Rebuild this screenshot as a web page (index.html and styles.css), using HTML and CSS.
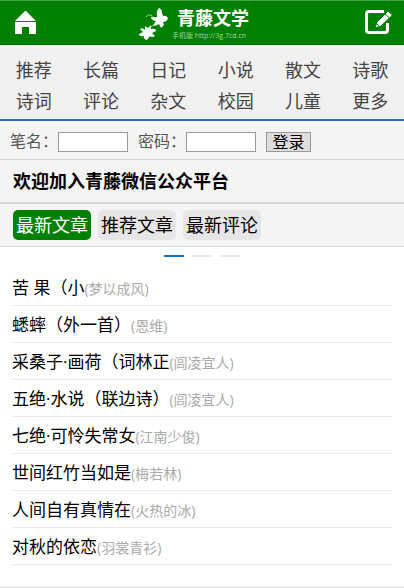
FILE: index.html
```html
<!DOCTYPE html>
<html lang="zh-CN">
<head>
    <meta charset="UTF-8">
    <meta name="viewport" content="width=device-width, initial-scale=1">
    <title>青藤文学</title>
    <link rel="stylesheet" href="styles.css">
</head>
<body>
<header class="header">
    <a class="icon-link" href="#" aria-label="首页">
        <svg class="icon-home" viewBox="0 0 22 24" width="22" height="24" fill="#fff">
            <path d="M10 0L0 10H21L11 0Z"/>
            <path d="M0 11H21V23H14V16H7V23H0Z"/>
        </svg>
    </a>
    <a class="logo" href="#">
        <svg viewBox="0 0 30 34" width="30" height="34" fill="#fff">
            <path d="M20 1Q23 2 23 6L24 9Q27 8 29 11Q28 15 24 15L25 18L22 21L20 17Q16 20 14 18L17 14Q12 13 12 10L18 10Q17 4 20 1Z"/>
            <path d="M6 19L9 21L12 18L12 22Q17 21 17 24L13 26L16 29Q13 31 11 29L8 33Q4 32 5 29Q0 30 0 27L4 25L1 22Q4 20 6 23Z"/>
            <path d="M7 10Q8 7 12 8Q14 9 13 11M11 20Q14 20 16 16" fill="none" stroke="#8fc98f" stroke-width="1"/>
        </svg>
        <span class="logo-text">
            <strong class="logo-name">青藤文学</strong>
            <small class="logo-url">手机版 http://3g.7cd.cn</small>
        </span>
    </a>
    <a class="icon-link icon-right" href="#" aria-label="投稿">
        <svg viewBox="0 0 28 25" width="28" height="25">
            <path d="M19 1.500H4Q1.500 1.500 1.500 4V20Q1.500 22.500 4 22.500H20Q22.500 22.500 22.500 20V13" fill="none" stroke="#fff" stroke-width="3"/>
            <path d="M23 1L27.500 5L16 16L10 18L12 12Z" fill="#fff" stroke="#008000" stroke-width="1"/>
            <path d="M20 4L24.500 8M12 14L14 16" fill="none" stroke="#008000" stroke-width="1"/>
        </svg>
    </a>
</header>

<nav class="nav">
    <a href="#">推荐</a>
    <a href="#">长篇</a>
    <a href="#">日记</a>
    <a href="#">小说</a>
    <a href="#">散文</a>
    <a href="#">诗歌</a>
    <a href="#">诗词</a>
    <a href="#">评论</a>
    <a href="#">杂文</a>
    <a href="#">校园</a>
    <a href="#">儿童</a>
    <a href="#">更多</a>
</nav>

<form class="login">
    <label for="username">笔名：</label>
    <input type="text" id="username" name="username">
    <label for="password">密码：</label>
    <input type="password" id="password" name="password">
    <button type="submit">登录</button>
</form>

<h1 class="notice">欢迎加入青藤微信公众平台</h1>

<div class="tabs">
    <button type="button" class="tab active">最新文章</button>
    <button type="button" class="tab">推荐文章</button>
    <button type="button" class="tab">最新评论</button>
</div>

<main class="content">
    <div class="dots">
        <span class="dot current"></span>
        <span class="dot"></span>
        <span class="dot"></span>
    </div>
    <ul class="list">
        <li><a href="#">苦 果（小</a><span class="author">(梦以成风)</span></li>
        <li><a href="#">蟋蟀（外一首）</a><span class="author">(恩维)</span></li>
        <li><a href="#">采桑子·画荷（词林正</a><span class="author">(闾凌宜人)</span></li>
        <li><a href="#">五绝·水说（联边诗）</a><span class="author">(闾凌宜人)</span></li>
        <li><a href="#">七绝·可怜失常女</a><span class="author">(江南少俊)</span></li>
        <li><a href="#">世间红竹当如是</a><span class="author">(梅若林)</span></li>
        <li><a href="#">人间自有真情在</a><span class="author">(火热的冰)</span></li>
        <li><a href="#">对秋的依恋</a><span class="author">(羽裳青衫)</span></li>
    </ul>
</main>
</body>
</html>
```

FILE: styles.css
```css
* {
    box-sizing: border-box;
}

body {
    margin: 0;
    background-color: #fff;
    color: #000;
    font-family: "Open Sans", "Noto Sans CJK SC", sans-serif;
    font-size: 17px;
}

a {
    color: inherit;
    text-decoration: none;
}

svg {
    display: block;
}

.header {
    display: grid;
    grid-template-columns: 1fr auto 1fr;
    align-items: center;
    height: 45px;
    padding: 0 11px 0 15px;
    background-color: #008000;
    border-top: 1px solid #46a046;
    border-bottom: 1px solid #006a00;
}

.icon-link {
    justify-self: start;
}

.icon-right {
    justify-self: end;
}

.logo {
    display: flex;
    align-items: center;
    gap: 3px;
    padding: 2px 20px 0 0;
    color: #fff;
}

.logo-text {
    display: flex;
    flex-direction: column;
}

.logo-name {
    padding-left: 5px;
    font-size: 18px;
    line-height: 24px;
}

.logo-url {
    color: #a5d3a5;
    font-size: 7px;
    line-height: 12px;
    white-space: nowrap;
}

.nav {
    display: grid;
    grid-template-columns: repeat(6, 1fr);
    padding: 10px 0 2px;
    background-color: #f0f0f0;
    border-bottom: 2px solid #2a6ebb;
    color: #444;
    font-size: 18px;
    line-height: 31px;
    text-align: center;
}

.login {
    display: flex;
    align-items: center;
    height: 39px;
    padding: 3px 10px 0;
    background-color: #f4f4f4;
    border-bottom: 1px solid #d8d8d8;
    color: #555;
    font-size: 16px;
}

.login label {
    padding-bottom: 3px;
}

.login input {
    width: 70px;
    height: 20px;
    margin-right: 10px;
    padding: 0 2px;
    background-color: #fff;
    border: 1px solid #999;
    border-radius: 0;
}

.login button {
    width: 45px;
    height: 20px;
    padding: 0;
    background-color: #ddd;
    border: 1px solid #999;
    color: #000;
    font-family: inherit;
    font-size: 16px;
    line-height: 18px;
}

.notice {
    margin: 0;
    padding: 0 13px;
    background-color: #f4f4f4;
    border-bottom: 2px solid #d8d8d8;
    font-size: 18px;
    line-height: 42px;
}

.tabs {
    display: flex;
    gap: 7px;
    padding: 6px 13px;
    background-color: #f4f4f4;
    border-bottom: 1px solid #d8d8d8;
}

.tab {
    height: 30px;
    padding: 0 3px;
    background-color: #e6e6e6;
    border: none;
    border-radius: 5px;
    color: #000;
    font-family: inherit;
    font-size: 18px;
    line-height: 30px;
    cursor: pointer;
}

.tab.active {
    background-color: #008000;
    color: #fff;
}

.content {
    padding: 8px 12px 22px;
    border-bottom: 1px solid #d8d8d8;
}

.dots {
    display: flex;
    justify-content: center;
    gap: 8px;
}

.dot {
    width: 20px;
    height: 2px;
    background-color: #e8e8e8;
}

.dot.current {
    background-color: #1470c4;
}

.list {
    margin: 12px 0 0;
    padding: 0;
    list-style: none;
}

.list li {
    height: 37px;
    border-bottom: 1px solid #e8e8e8;
    line-height: 38px;
    white-space: nowrap;
}

.author {
    color: #aaa;
    font-size: 14px;
}
```
